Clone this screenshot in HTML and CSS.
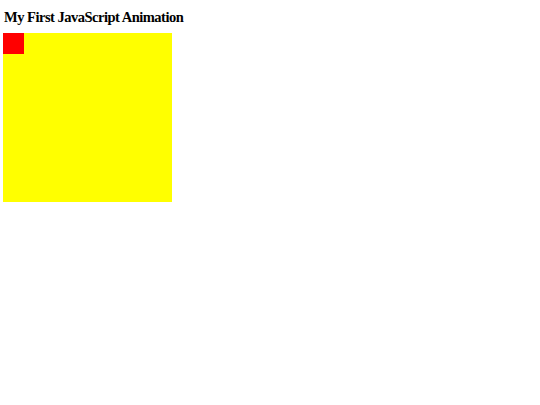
FILE: index.html
```html
<!DOCTYPE html>
<html>
<head>
<meta charset="utf-8">
<link rel="stylesheet" href="styles.css">
</head>
<body>
<div class="page">
<h2 class="title">My First JavaScript Animation</h2>
<div class="container">
<div class="animate"></div>
</div>
</div>
</body>
</html>
```
FILE: styles.css
```css
html, body {
  margin: 0;
  padding: 0;
  background: #ffffff;
}
.page {
  padding: 3px 3px;
}
.title {
  font-family: "Liberation Serif", "Times New Roman", serif;
  font-weight: bold;
  font-size: 14.5px;
  letter-spacing: -0.5px;
  line-height: 17px;
  margin: 6px 0 7px 1px;
  color: #000;
}
.container {
  width: 169px;
  height: 169px;
  background: #ffff00;
}
.animate {
  width: 21px;
  height: 21px;
  background: #ff0000;
}
```
